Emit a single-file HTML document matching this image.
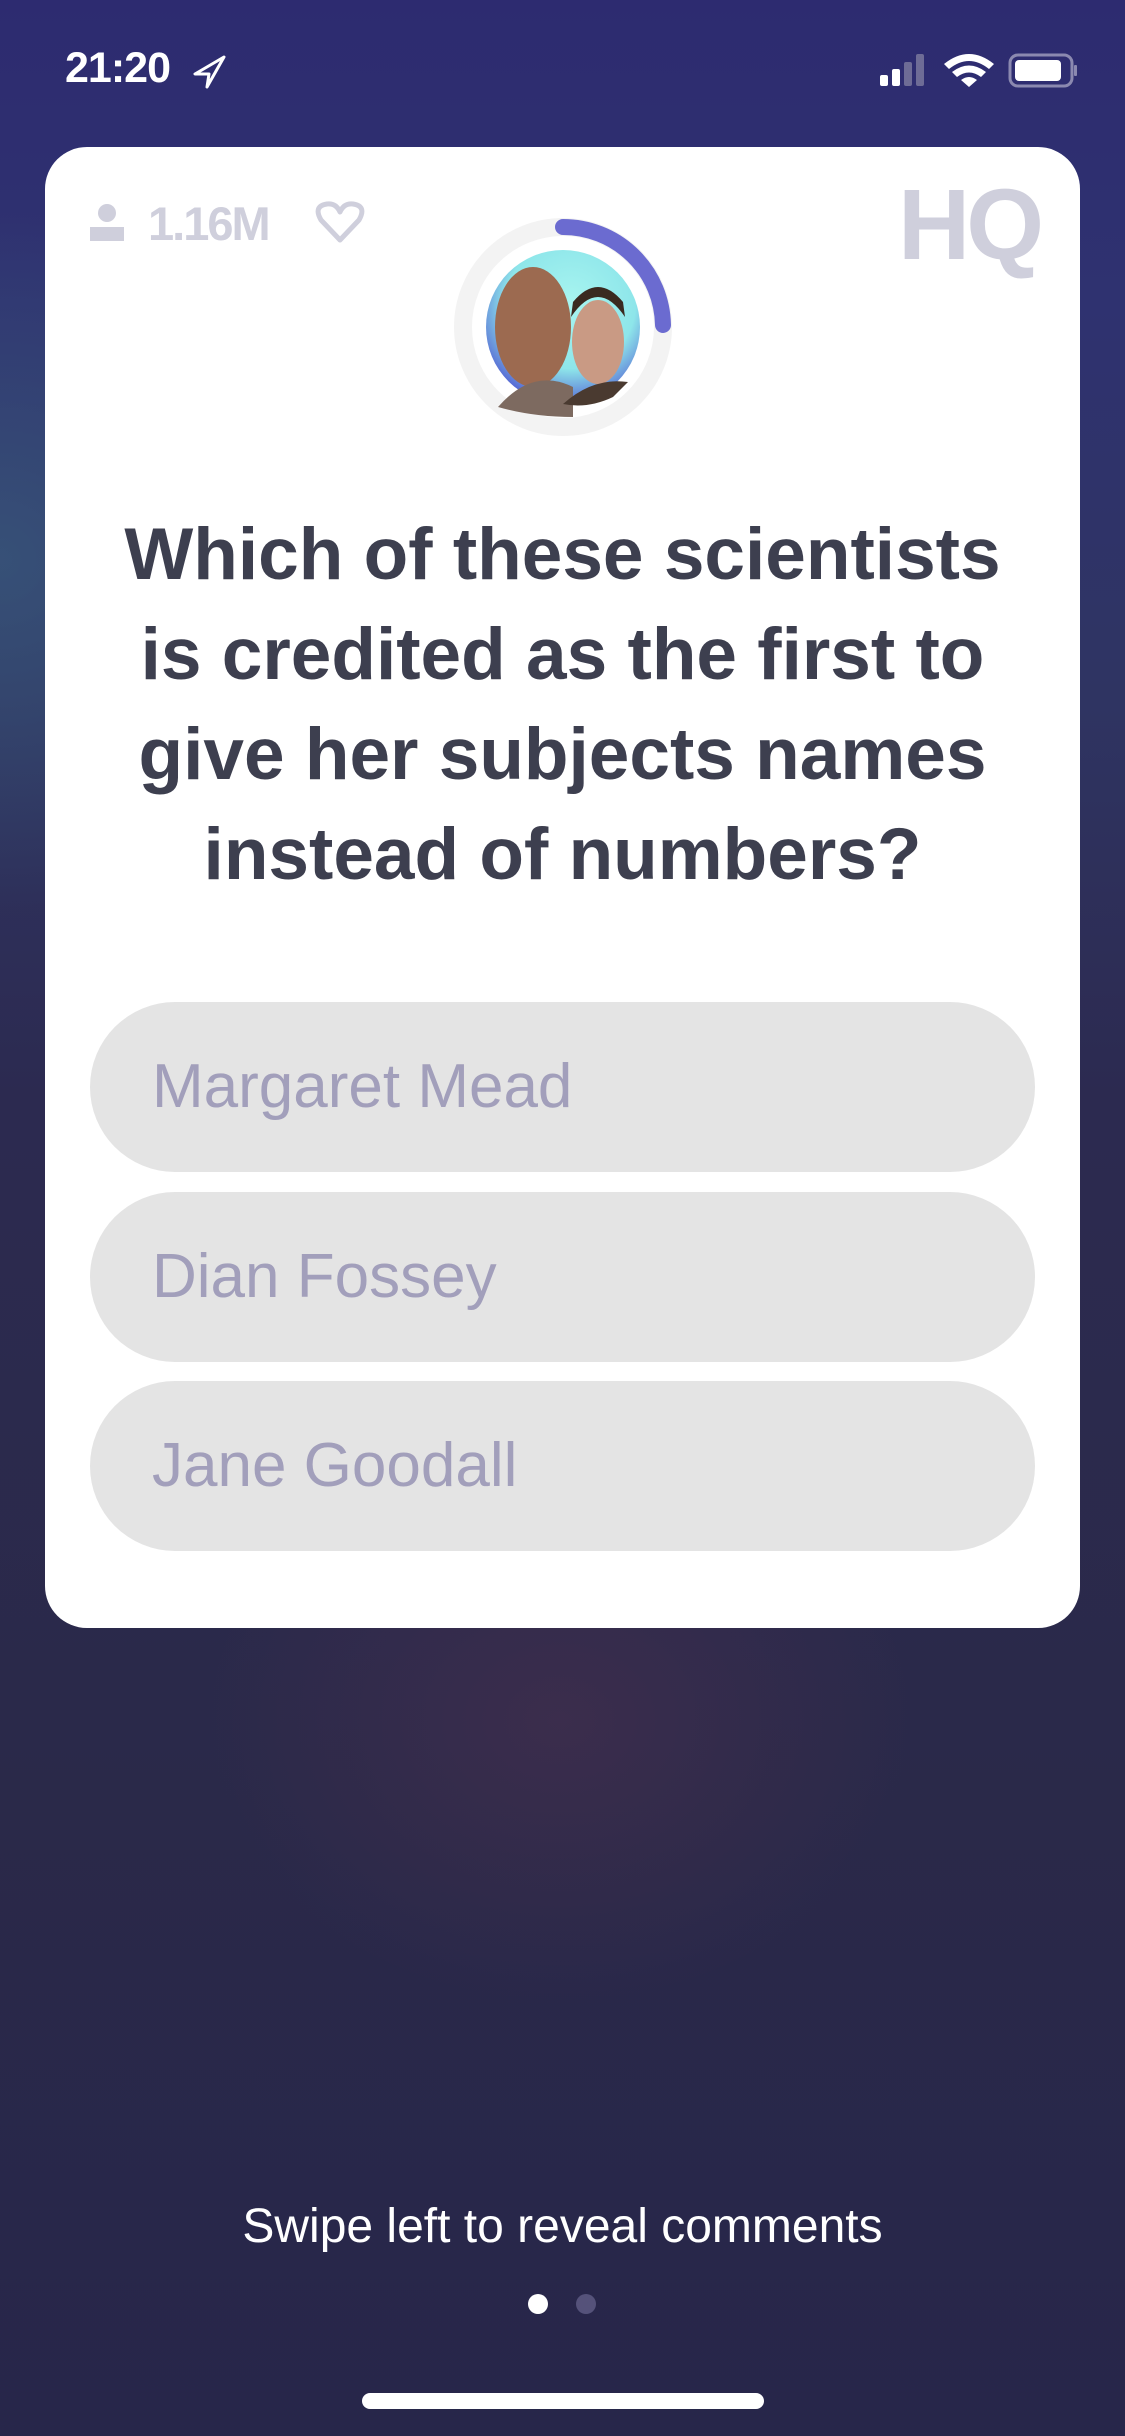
<!DOCTYPE html>
<html><head><meta charset="utf-8"><style>
*{margin:0;padding:0;box-sizing:border-box}
html,body{width:1125px;height:2436px;overflow:hidden}
body{position:relative;font-family:"Liberation Sans",sans-serif;
background:
radial-gradient(ellipse 500px 400px at 560px 1720px, rgba(80,50,80,0.45), transparent 70%),
radial-gradient(ellipse 500px 500px at 0px 560px, rgba(60,100,130,0.6), transparent 70%),
linear-gradient(180deg,#2d2b70 0px,#2f3270 300px,#2f3462 700px,#2c2a50 1100px,#2a2949 1800px,#27264a 2436px);}
.abs{position:absolute}
.card{left:45px;top:147px;width:1035px;height:1481px;background:#fff;border-radius:42px}
.q{left:20px;top:505px;width:1085px;text-align:center;font-weight:bold;font-size:73px;line-height:100px;color:#3d3f4f;letter-spacing:0px}
.pill{left:90px;width:945px;height:170px;border-radius:85px;background:#e4e4e4;color:#a29fbb;font-size:62px;line-height:170px;padding-left:62px}
</style></head><body>
<div class="abs" style="left:65px;top:44px;color:#fff;font-size:43px;font-weight:bold;letter-spacing:-1px">21:20</div>
<svg class="abs" style="left:192px;top:55px" width="36" height="34" viewBox="0 0 36 34"><path d="M32 2 L3 19 L17 19 L15 32 Z" fill="none" stroke="#fff" stroke-width="3" stroke-linejoin="round"/></svg>
<svg class="abs" style="left:878px;top:50px" width="200" height="40" viewBox="0 0 200 40">
<rect x="2" y="25" width="8" height="11" rx="2" fill="#fff"/>
<rect x="14" y="19" width="8" height="17" rx="2" fill="#fff"/>
<rect x="26" y="12" width="8" height="24" rx="2" fill="#6e6c96"/>
<rect x="38" y="4" width="8" height="32" rx="2" fill="#6e6c96"/>
<path d="M66 14 Q91 -6 116 14 L111 19 Q91 3 71 19Z M74 22 Q91 9 108 22 L103 27 Q91 18 79 27Z M83 30 Q91 24 99 30 L91 37Z" fill="#fff"/>
<rect x="132" y="5" width="62" height="31" rx="8" fill="none" stroke="#8b89b0" stroke-width="3"/>
<rect x="137" y="10" width="46" height="21" rx="4" fill="#fff"/>
<rect x="196" y="15" width="3" height="11" rx="1" fill="#8b89b0"/>
</svg>
<div class="abs card"></div>
<svg class="abs" style="left:88px;top:203px" width="40" height="38" viewBox="0 0 40 38"><circle cx="19" cy="10" r="9" fill="#cfcfdc"/><rect x="2" y="24" width="34" height="14" fill="#cfcfdc"/></svg>
<div class="abs" style="left:148px;top:196px;font-size:47px;font-weight:bold;color:#cfcfdc;letter-spacing:-2px">1.16M</div>
<svg class="abs" style="left:315px;top:200px" width="50" height="44" viewBox="0 0 50 44"><path d="M25 40 L6 20 Q-2 6 12 4 Q21 3 25 12 Q29 3 38 4 Q52 6 44 20 Z" fill="none" stroke="#cfcfdc" stroke-width="5" stroke-linejoin="round"/></svg>
<div class="abs" style="left:898px;top:168px;font-size:100px;color:#cfcfdc;letter-spacing:-4px;font-weight:bold">HQ</div>
<svg class="abs" style="left:453px;top:217px" width="220" height="220" viewBox="0 0 220 220">
<defs><radialGradient id="bg" cx="0.55" cy="0.35" r="0.7"><stop offset="0" stop-color="#a8f5f0"/><stop offset="0.6" stop-color="#8ee6ea"/><stop offset="1" stop-color="#4b4fd0"/></radialGradient></defs>
<circle cx="110" cy="110" r="100" fill="none" stroke="#f3f3f3" stroke-width="18"/>
<path d="M110 10 A100 100 0 0 1 210 108" fill="none" stroke="#6b6bd0" stroke-width="16" stroke-linecap="round"/>
<circle cx="110" cy="110" r="77" fill="url(#bg)"/>
<ellipse cx="80" cy="110" rx="38" ry="60" fill="#9c6a50"/>
<path d="M45 190 Q80 150 120 170 L120 200 Q80 200 45 190Z" fill="#7d6a60"/>
<ellipse cx="145" cy="125" rx="26" ry="42" fill="#c99a84"/>
<path d="M118 100 Q145 60 172 100 L170 85 Q145 55 120 85Z" fill="#3a2a20"/>
<path d="M110 187 Q140 160 175 165 L160 180 Q135 192 110 187Z" fill="#4a3a30"/>
</svg>
<div class="abs q">Which of these scientists<br>is credited as the first to<br>give her subjects names<br>instead of numbers?</div>
<div class="abs pill" style="top:1002px">Margaret Mead</div>
<div class="abs pill" style="top:1192px">Dian Fossey</div>
<div class="abs pill" style="top:1381px">Jane Goodall</div>
<div class="abs" style="left:0;top:2199px;width:1125px;text-align:center;color:#fff;font-size:48px">Swipe left to reveal comments</div>
<div class="abs" style="left:528px;top:2294px;width:20px;height:20px;border-radius:50%;background:#fff"></div>
<div class="abs" style="left:576px;top:2294px;width:20px;height:20px;border-radius:50%;background:#55527a"></div>
<div class="abs" style="left:362px;top:2393px;width:402px;height:16px;border-radius:8px;background:#fff"></div>
</body></html>
